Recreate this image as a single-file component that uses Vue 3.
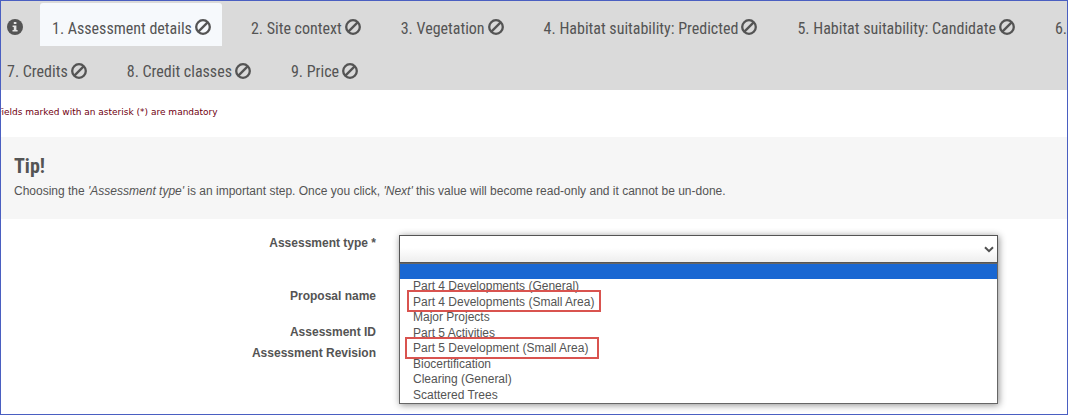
<script setup>
import { ref } from 'vue'

const tabRows = [
  [
    { label: '1. Assessment details', active: true },
    { label: '2. Site context' },
    { label: '3. Vegetation' },
    { label: '4. Habitat suitability: Predicted' },
    { label: '5. Habitat suitability: Candidate' },
    { label: '6.' },
  ],
  [{ label: '7. Credits' }, { label: '8. Credit classes' }, { label: '9. Price' }],
]

const options = [
  { label: '' },
  { label: 'Part 4 Developments (General)' },
  { label: 'Part 4 Developments (Small Area)', mark: 'mark-first' },
  { label: 'Major Projects' },
  { label: 'Part 5 Activities' },
  { label: 'Part 5 Development (Small Area)', mark: 'mark-second' },
  { label: 'Biocertification' },
  { label: 'Clearing (General)' },
  { label: 'Scattered Trees' },
]

const selected = ref('')
</script>

<template>
  <main class="page">
    <nav class="tabs" aria-label="Assessment steps">
      <div v-for="(row, i) in tabRows" :key="i" class="tab-row">
        <a v-if="i === 0" href="#info" class="info" aria-label="Information">
          <svg viewBox="0 0 16 16" width="16" height="16">
            <circle cx="8" cy="8" r="8" fill="#545454" />
            <path d="M6.8 3h2.6v2.1H6.8zM5.6 6.4h3.8v4.5h1.2v1.7H5.5v-1.7h1.3V8.1H5.6z" fill="#e4e4e4" />
          </svg>
        </a>
        <a
          v-for="tab in row"
          :key="tab.label"
          href="#step"
          class="tab"
          :class="{ active: tab.active }"
        >
          <span>{{ tab.label }}</span>
          <svg class="ban" viewBox="0 0 16 16" width="16" height="16" aria-hidden="true">
            <circle cx="8" cy="8" r="6.8" fill="none" stroke="#545454" stroke-width="2.3" />
            <path d="M3.4 12.6 12.6 3.4" stroke="#545454" stroke-width="2.3" />
          </svg>
        </a>
      </div>
    </nav>

    <p class="mandatory">Fields marked with an asterisk (*) are mandatory</p>

    <section class="tip">
      <h2>Tip!</h2>
      <p>
        Choosing the <em>'Assessment type'</em> is an important step. Once you click,
        <em>'Next'</em> this value will become read-only and it cannot be un-done.
      </p>
    </section>

    <form class="form" @submit.prevent>
      <div class="labels">
        <label for="assessment-type" class="label type">Assessment type *</label>
        <span class="label name">Proposal name</span>
        <span class="label id">Assessment ID</span>
        <span class="label">Assessment Revision</span>
      </div>
      <div class="field">
        <div class="select-wrap">
          <select id="assessment-type" v-model="selected">
            <option v-for="o in options" :key="o.label" :value="o.label">{{ o.label }}</option>
          </select>
          <svg class="chevron" viewBox="0 0 10 7" width="10" height="7" aria-hidden="true">
            <path d="M1 1.2 5 5.2 9 1.2" fill="none" stroke="#505050" stroke-width="2" />
          </svg>
        </div>
        <ul class="menu" role="listbox" aria-label="Assessment type">
          <li
            v-for="o in options"
            :key="o.label"
            role="option"
            :aria-selected="o.label === selected"
            :class="[o.mark, { current: o.label === selected }]"
            @click="selected = o.label"
          >{{ o.label }}</li>
        </ul>
      </div>
    </form>
  </main>
</template>

<style>
html,
body,
#app {
  height: 100%;
  margin: 0;
}
</style>

<style scoped>
.page {
  box-sizing: border-box;
  min-height: 100%;
  border: 1px solid #4a5fc1;
  background: #fff;
  color: #545454;
  font: 12px/15px "Liberation Sans", Arial, sans-serif;
  overflow: hidden;
}
.tabs {
  background: #dadada;
  padding-top: 2px;
  font: 16px/20px "Roboto Condensed", "Liberation Sans Narrow", Roboto, sans-serif;
}
.tab-row {
  display: flex;
  gap: 17px;
  height: 43px;
  white-space: nowrap;
  overflow: hidden;
}
.tab-row + .tab-row {
  height: 44px;
  margin-left: -6px;
}
.info {
  display: flex;
  flex: none;
  align-items: center;
  padding: 5px 0 0 6px;
}
.tab {
  display: flex;
  flex: none;
  align-items: center;
  gap: 3px;
  padding: 8px 11px 0 12px;
  box-sizing: border-box;
  color: #545454;
  text-decoration: none;
}
.tab.active {
  background: #f6f9fc;
  border-radius: 3px 3px 0 0;
}
.ban {
  margin-bottom: 3px;
}
.mandatory {
  margin: 0 0 0 -4px;
  padding: 15px 0 17px;
  color: #700010;
  font: 9px/15px "DejaVu Sans", Verdana, sans-serif;
}
.tip {
  background: #f6f6f6;
  padding: 18px 13px 20px;
}
.tip h2 {
  margin: 0 0 6px;
  font: bold 20px/23px "Roboto Condensed", "Liberation Sans Narrow", Roboto, sans-serif;
}
.tip p {
  margin: 0;
}
.form {
  display: grid;
  grid-template-columns: 375fr 599fr 69fr;
  column-gap: 23px;
  margin-right: -23px;
  padding-top: 16px;
}
.labels {
  display: flex;
  flex-direction: column;
  padding-top: 1px;
  text-align: right;
  font-weight: bold;
}
.label {
  margin-bottom: 6px;
}
.label.type {
  margin-bottom: 38px;
}
.label.name {
  margin-bottom: 21px;
}
.field {
  box-shadow: 1px 1px 7px rgba(0, 0, 0, 0.45);
  align-self: start;
}
.select-wrap {
  position: relative;
}
select {
  display: block;
  width: 100%;
  height: 28px;
  border: 1px solid #545454;
  border-radius: 0;
  background: linear-gradient(#fff 45%, #eee);
  color: #545454;
  font: inherit;
  padding: 0 12px;
  appearance: none;
}
.chevron {
  position: absolute;
  right: 4px;
  top: 11px;
}
.menu {
  margin: 0;
  padding: 0;
  list-style: none;
  border: 1px solid #666;
  background: #fff;
}
.menu li {
  position: relative;
  min-height: 15px;
  padding: 0 13px;
  line-height: 15px;
}
.menu li:nth-child(even) {
  min-height: 16px;
}
.menu li.current {
  background: #1967d2;
}
.mark-first::after,
.mark-second::after {
  content: "";
  position: absolute;
  z-index: 1;
  box-sizing: border-box;
  left: 7px;
  top: -5px;
  width: 194px;
  height: 22px;
  border: 2px solid #d9534f;
}
.mark-second::after {
  left: 5px;
  top: -4px;
}
</style>
